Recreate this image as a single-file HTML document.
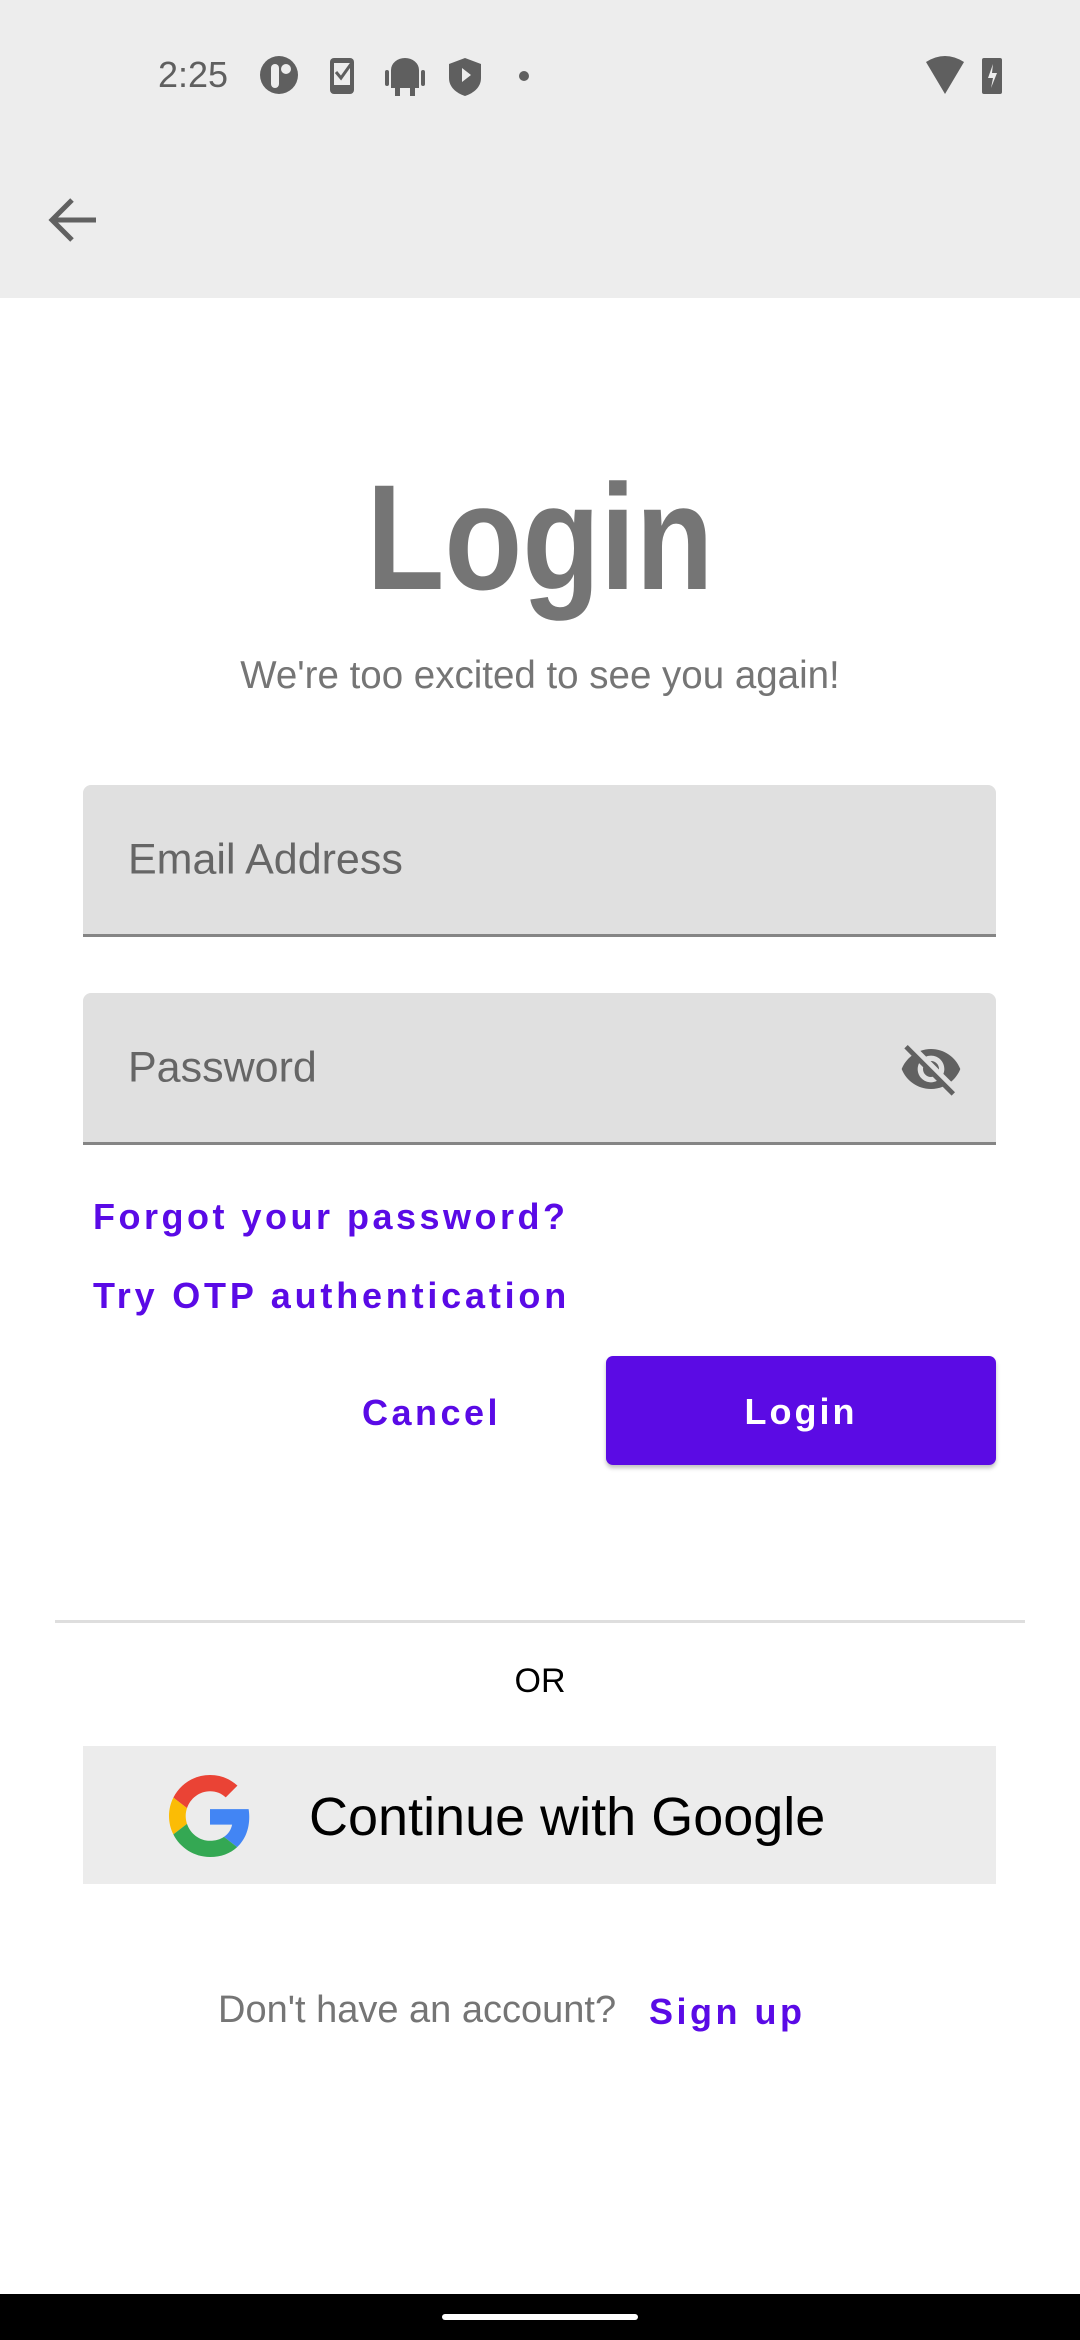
<!DOCTYPE html>
<html><head><meta charset="utf-8"><style>
*{margin:0;padding:0;box-sizing:border-box}
body{width:1080px;height:2340px;position:relative;background:#fff;font-family:"Liberation Sans",sans-serif;overflow:hidden}
.abs{position:absolute}
.top{left:0;top:0;width:1080px;height:298px;background:#ededed}
.field{left:83px;width:913px;height:152px;background:#e0e0e0;border-radius:8px 8px 0 0;border-bottom:3px solid #858585}
.lbl{position:absolute;left:45px;top:50%;transform:translateY(-50%);font-size:43px;color:#666}
.link{color:#5a0ae6;font-weight:bold;letter-spacing:3.5px;font-size:36px}
</style></head><body>
<div class="abs top"></div>
<div class="abs" style="left:158px;top:54px;font-size:36px;color:#5f5f5f">2:25</div>
<svg class="abs" style="left:258px;top:52px" width="280" height="46" viewBox="0 0 280 46">
<g fill="#5f5f5f">
<circle cx="21" cy="23" r="19"/><rect x="13" y="12" width="8" height="24" rx="4" fill="#ededed"/><circle cx="28" cy="17" r="5" fill="#ededed"/>
<rect x="72" y="6" width="24" height="36" rx="4"/><rect x="76" y="11" width="16" height="22" fill="#ededed"/><path d="M78 20l5 6 10-14" stroke="#5f5f5f" stroke-width="3" fill="none"/>
<path d="M133 18a14 12 0 0 1 28 0v18h-28z"/><rect x="127" y="18" width="4" height="16" rx="2"/><rect x="163" y="18" width="4" height="16" rx="2"/><rect x="137" y="34" width="5" height="10"/><rect x="152" y="34" width="5" height="10"/>
<path d="M207 6l16 6v14c0 9-7 15-16 18c-9-3-16-9-16-18v-14z"/><path d="M204 16l9 7-9 7z" fill="#ededed"/>
<circle cx="266" cy="24" r="5"/>
</g></svg>
<svg class="abs" style="left:924px;top:52px" width="90" height="46" viewBox="0 0 90 46">
<path d="M2 10q19-12 38 0l-19 32z" fill="#5f5f5f"/>
<rect x="58" y="6" width="20" height="36" rx="2" fill="#5f5f5f"/><path d="M69 12l-5 14h5l-2 10 6-15h-5z" fill="#ededed"/></svg>
<svg class="abs" style="left:48px;top:196px" width="52" height="48" viewBox="0 0 52 48"><path d="M24 4L4 24l20 20M4 24h44" stroke="#616161" stroke-width="5" fill="none"/></svg>
<div class="abs" style="left:0;width:1080px;top:452px;text-align:center;font-size:150px;font-weight:bold;color:#757575;line-height:170px;transform:scaleX(0.85)">Login</div>
<div class="abs" style="left:0;width:1080px;top:654px;text-align:center;font-size:38.5px;color:#757575">We're too excited to see you again!</div>
<div class="abs field" style="top:785px"><span class="lbl">Email Address</span></div>
<div class="abs field" style="top:993px"><span class="lbl">Password</span>
<svg style="position:absolute;left:816px;top:44px" width="64" height="64" viewBox="0 0 24 24"><path fill="#616161" d="M12 7c2.76 0 5 2.240 5 5 0 .65-.13 1.26-.36 1.830l2.92 2.92c1.51-1.26 2.7-2.89 3.43-4.75-1.73-4.39-6-7.5-11-7.5-1.4 0-2.74.25-3.98.7l2.16 2.16C10.74 7.13 11.35 7 12 7zM2 4.27l2.28 2.28.46.46C3.08 8.3 1.78 10.02 1 12c1.730 4.39 6 7.5 11 7.5 1.55 0 3.03-.3 4.38-.84l.42.42L19.73 22 21 20.73 3.27 3 2 4.27zM7.53 9.8l1.55 1.55c-.05.21-.08.43-.08.65 0 1.66 1.34 3 3 3 .22 0 .44-.03.65-.08l1.55 1.55c-.67.33-1.41.53-2.2.53-2.76 0-5-2.24-5-5 0-.79.2-1.53.53-2.2zm4.31-.78l3.15 3.15.02-.16c0-1.66-1.34-3-3-3l-.17.01z"/></svg></div>
<div class="abs link" style="left:93px;top:1196px">Forgot your password?</div>
<div class="abs link" style="left:93px;top:1275px;letter-spacing:3.8px">Try OTP authentication</div>
<div class="abs link" style="left:362px;top:1392px">Cancel</div>
<div class="abs" style="left:606px;top:1356px;width:390px;height:109px;background:#5b0be4;border-radius:7px;box-shadow:0 3px 4px rgba(0,0,0,.25);color:#fff;font-weight:bold;font-size:36px;letter-spacing:3px;text-align:center;line-height:111px">Login</div>
<div class="abs" style="left:55px;top:1620px;width:970px;height:3px;background:#dedede"></div>
<div class="abs" style="left:0;width:1080px;top:1662px;text-align:center;font-size:34px;color:#000">OR</div>
<div class="abs" style="left:83px;top:1746px;width:913px;height:138px;background:#ececec"></div>
<svg class="abs" style="left:169px;top:1775px" width="82" height="82" viewBox="0 0 48 48">
<path fill="#EA4335" d="M24 9.5c3.54 0 6.71 1.22 9.21 3.6l6.85-6.85C35.9 2.38 30.47 0 24 0 14.62 0 6.510 5.38 2.56 13.22l7.98 6.19C12.43 13.72 17.74 9.5 24 9.5z"/>
<path fill="#4285F4" d="M46.98 24.55c0-1.57-.15-3.09-.38-4.55H24v9.02h12.94c-.58 2.96-2.26 5.48-4.78 7.18l7.73 6c4.51-4.18 7.09-10.36 7.09-17.65z"/>
<path fill="#FBBC05" d="M10.53 28.59c-.48-1.45-.76-2.99-.76-4.59s.27-3.14.76-4.59l-7.98-6.19C.92 16.46 0 20.12 0 24c0 3.88.92 7.54 2.56 10.78l7.97-6.19z"/>
<path fill="#34A853" d="M24 48c6.48 0 11.93-2.13 15.89-5.81l-7.73-6c-2.15 1.45-4.92 2.3-8.16 2.3-6.26 0-11.57-4.22-13.47-9.91l-7.98 6.19C6.51 42.62 14.62 48 24 48z"/>
</svg>
<div class="abs" style="left:309px;top:1786px;font-size:54px;color:#000">Continue with Google</div>
<div class="abs" style="left:218px;top:1989px;font-size:38px;color:#757575">Don't have an account?</div>
<div class="abs link" style="left:649px;top:1991px">Sign up</div>
<div class="abs" style="left:0;top:2294px;width:1080px;height:46px;background:#000"></div>
<div class="abs" style="left:442px;top:2314px;width:196px;height:6px;border-radius:3px;background:#fff"></div>
</body></html>
